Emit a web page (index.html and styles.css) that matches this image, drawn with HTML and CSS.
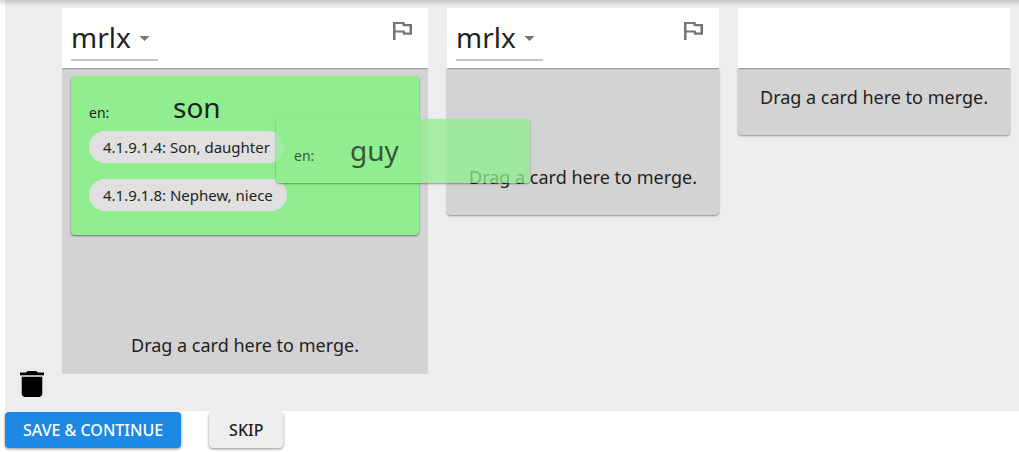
FILE: index.html
```html
<!DOCTYPE html>
<html lang="en">
<head>
<meta charset="utf-8">
<title>Merge duplicates</title>
<link rel="stylesheet" href="styles.css">
</head>
<body>
<main class="page">
  <section class="board">
    <div class="trash">
      <svg class="trash-icon" viewBox="5 3 14 18" preserveAspectRatio="none" role="img" aria-label="Delete"><path d="M6 19c0 1.100.9 2 2 2h8c1.100 0 2-.9 2-2V7H6v12zM19 4h-3.500l-1-1h-5l-1 1H5v2h14V4z"/></svg>
    </div>
    <div class="columns">
      <article class="column">
        <header class="column-head">
          <span class="picker">
            <select class="picker-select" aria-label="Vernacular form"><option>mrlx</option></select>
            <svg class="picker-arrow" viewBox="0 0 10 5" aria-hidden="true"><path d="M0 0h10L5 5z"/></svg>
          </span>
          <button class="flag" type="button" aria-label="Flag">
            <svg class="flag-icon" viewBox="5 4 15 17" preserveAspectRatio="none"><path d="M12.360 6l.4 2H18v6h-3.360l-.4-2H7V6h5.360M14 4H5v17h2v-7h5.600l.4 2h7V6h-5.600L14 4z"/></svg>
          </button>
        </header>
        <div class="column-body column-body-tall">
          <div class="card">
            <div class="gloss"><span class="lang">en:</span><span class="word">son</span></div>
            <ul class="chips">
              <li class="chip">4.1.9.1.4: Son, daughter</li>
              <li class="chip">4.1.9.1.8: Nephew, niece</li>
            </ul>
          </div>
          <p class="hint">Drag a card here to merge.</p>
        </div>
      </article>
      <article class="column">
        <header class="column-head">
          <span class="picker">
            <select class="picker-select" aria-label="Vernacular form"><option>mrlx</option></select>
            <svg class="picker-arrow" viewBox="0 0 10 5" aria-hidden="true"><path d="M0 0h10L5 5z"/></svg>
          </span>
          <button class="flag" type="button" aria-label="Flag">
            <svg class="flag-icon" viewBox="5 4 15 17" preserveAspectRatio="none"><path d="M12.360 6l.4 2H18v6h-3.360l-.4-2H7V6h5.360M14 4H5v17h2v-7h5.600l.4 2h7V6h-5.600L14 4z"/></svg>
          </button>
        </header>
        <div class="column-body column-body-paper column-body-source">
          <p class="hint">Drag a card here to merge.</p>
        </div>
      </article>
      <article class="column">
        <header class="column-head"></header>
        <div class="column-body column-body-paper">
          <p class="hint">Drag a card here to merge.</p>
        </div>
      </article>
    </div>
    <div class="card card-dragged">
      <div class="gloss"><span class="lang">en:</span><span class="word">guy</span></div>
    </div>
  </section>
  <div class="actions">
    <button class="button button-primary" type="button">SAVE &amp; CONTINUE</button>
    <button class="button" type="button">SKIP</button>
  </div>
</main>
</body>
</html>
```
FILE: styles.css
```css
* {
  box-sizing: border-box;
}

body {
  margin: 0;
  background: #fff;
  color: #1f1f1f;
  font-family: "Noto Sans", sans-serif;
}

.page {
  padding-left: 5px;
}

.page::before {
  content: "";
  position: absolute;
  z-index: 1;
  top: 0;
  left: 0;
  right: 0;
  height: 6px;
  background: linear-gradient(rgba(0, 0, 0, 0.16), rgba(0, 0, 0, 0));
}

.board {
  position: relative;
  display: flex;
  padding: 8px 9px 37px 0;
  background: #ededed;
}

.trash {
  display: flex;
  align-items: flex-end;
  flex: 0 0 57px;
  padding-left: 15px;
}

.trash-icon {
  width: 24px;
  height: 26px;
  margin-bottom: -23px;
}

.columns {
  display: grid;
  grid-template-columns: 366fr 272fr 272fr;
  align-items: start;
  gap: 19px;
  flex: 1;
}

.column-head {
  position: relative;
  display: flex;
  justify-content: space-between;
  height: 60px;
  padding: 10px 16px 0 9px;
  background: #fff;
  box-shadow: 0 0 2px rgba(0, 0, 0, 0.8);
  clip-path: inset(0 0 -4px 0);
}

.picker {
  position: relative;
  align-self: flex-start;
  border-bottom: 2px solid #c4c4c4;
}

.picker-select {
  display: block;
  width: 87px;
  height: 41px;
  padding: 0 0 3px;
  border: 0;
  background: transparent;
  color: inherit;
  font: 28px/38px "Noto Sans", sans-serif;
  appearance: none;
}

.picker-arrow {
  position: absolute;
  top: 18px;
  right: 8px;
  width: 11px;
  height: 5px;
  fill: #757575;
  pointer-events: none;
}

.flag {
  align-self: flex-start;
  padding: 4px 0 0;
  border: 0;
  background: none;
}

.flag-icon {
  display: block;
  width: 19px;
  height: 18px;
  fill: #757575;
}

.column-body {
  padding: 8px 9px 15px;
  background: #d3d3d3;
}

.column-body-paper {
  border-radius: 0 0 4px 4px;
  box-shadow: 0 1px 2px rgba(0, 0, 0, 0.4);
  padding: 15px 0 24px;
}

.column-body-source {
  padding-top: 95px;
}

.hint {
  margin: 0;
  font-size: 18px;
  line-height: 28px;
  text-align: center;
  white-space: nowrap;
}

.column-body-tall .hint {
  margin-top: 96px;
}

.card {
  padding: 12px 18px 24px;
  border-radius: 4px;
  background: #90ee90;
  box-shadow: 0 1px 2px rgba(0, 0, 0, 0.5);
}

.card-dragged {
  position: absolute;
  top: 119px;
  left: 271px;
  width: 254px;
  height: 64px;
  opacity: 0.75;
}

.gloss {
  display: flex;
  align-items: baseline;
  height: 40px;
  line-height: 38px;
}

.lang {
  flex: 0 0 56px;
  font-size: 14px;
}

.word {
  padding-left: 28px;
  font-size: 28px;
}

.card-dragged .word {
  padding-left: 0;
}

.chips {
  display: flex;
  flex-direction: column;
  align-items: flex-start;
  gap: 16px;
  margin: 3px 0 0;
  padding: 0;
  list-style: none;
}

.chip {
  padding: 0 14px;
  border-radius: 16px;
  background: #e0e0e0;
  font-size: 15px;
  line-height: 32px;
}

.actions {
  display: flex;
  gap: 28px;
  padding: 1px 0 4px;
}

.button {
  padding: 0 20px;
  border: 0;
  border-radius: 4px;
  background: #eee;
  box-shadow: 0 1px 3px rgba(0, 0, 0, 0.45);
  color: #1f1f1f;
  font: 500 16px/36px "Noto Sans", sans-serif;
}

.button-primary {
  padding: 0 18px;
  background: #1e88e5;
  color: #fff;
}
```
